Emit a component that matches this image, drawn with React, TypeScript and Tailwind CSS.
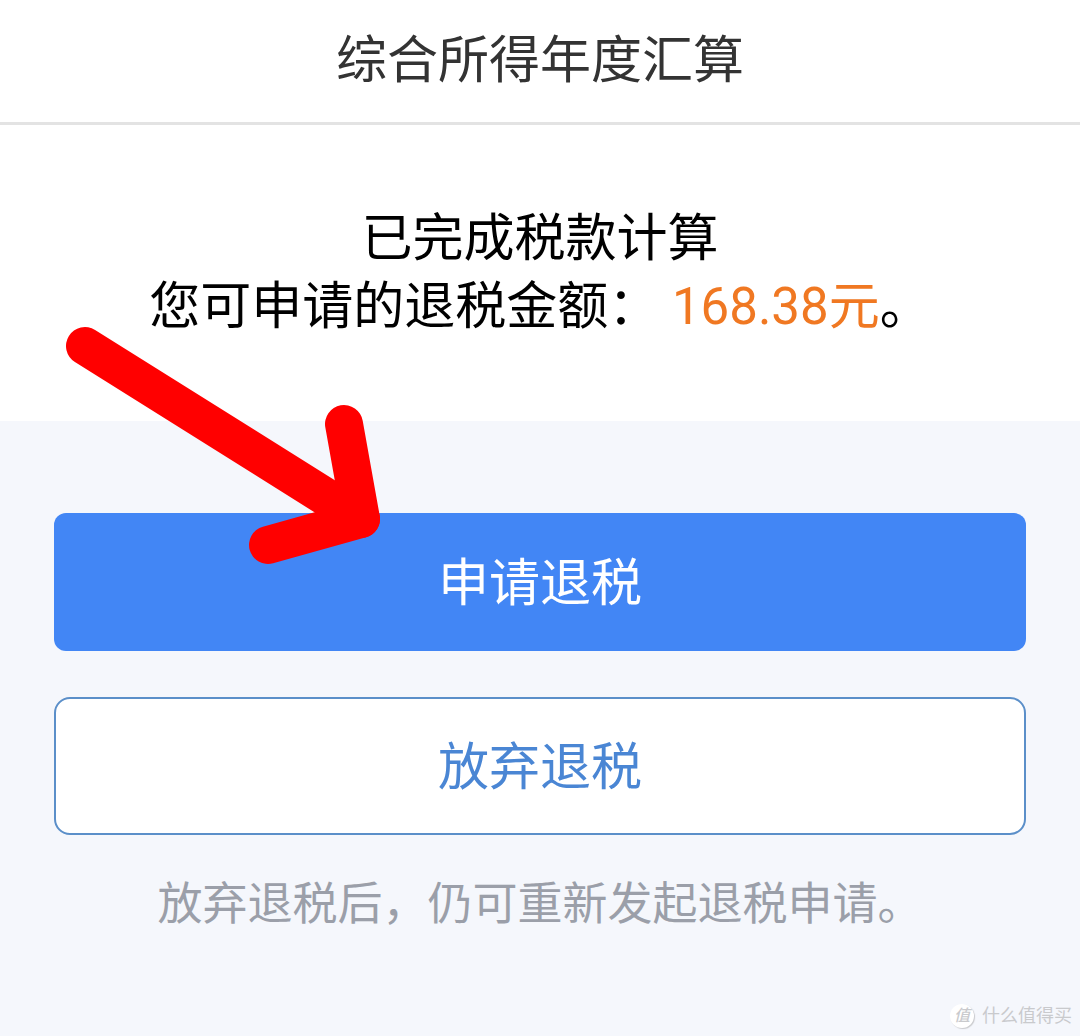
const REFUND_AMOUNT = '168.38';

function Header() {
  return (
    <header className="border-b-3 border-[#e3e3e3] bg-white pt-6 pb-6">
      <h1 className="text-center text-[51px] leading-[74px] text-[#333333]">综合所得年度汇算</h1>
    </header>
  );
}

function PointerArrow() {
  return (
    <svg
      className="pointer-events-none absolute top-[200px] left-[60px]"
      width="330"
      height="250"
      viewBox="60 325 330 250"
      fill="none"
      stroke="#ff0000"
      strokeWidth="38"
      strokeLinecap="round"
      strokeLinejoin="round"
      aria-hidden="true"
    >
      <path d="M85 346 L361 519" />
      <path d="M344 424 L361 519 L268 545" />
    </svg>
  );
}

function Watermark() {
  return (
    <div className="absolute right-2 bottom-2 flex items-center gap-2 text-[#c9cacd]">
      <span className="flex size-6 items-center justify-center rounded-full bg-white text-base leading-6 font-medium italic shadow-[1px_1px_1px_#c9cacd]">
        值
      </span>
      <span className="text-lg leading-6">什么值得买</span>
    </div>
  );
}

export default function App() {
  return (
    <div className="relative flex min-h-screen flex-col bg-[#f5f7fc] font-[Roboto,'Noto_Sans_CJK_SC',sans-serif]">
      <Header />

      <main className="relative flex-1">
        <section className="bg-white pt-20 pb-20 text-center text-[51px] leading-[68px] text-black">
          <p>已完成税款计算</p>
          <p>
            您可申请的退税金额： <span className="text-[#f07822]">{REFUND_AMOUNT}元</span>。
          </p>
        </section>

        <section className="px-[54px] pt-[92px]">
          <div className="flex flex-col gap-[46px]">
            <button type="button" className="h-[138px] rounded-xl bg-[#4286f5] pt-1 text-[51px] leading-[68px] text-white">
              申请退税
            </button>
            <button
              type="button"
              className="h-[138px] rounded-2xl border-2 border-[#5b8fc9] bg-white pt-1 text-[51px] leading-[68px] text-[#4a86d4]"
            >
              放弃退税
            </button>
          </div>
          <p className="mt-9 text-center text-[45px] leading-[68px] text-[#9b9fa9]">放弃退税后，仍可重新发起退税申请。</p>
        </section>

        <PointerArrow />
      </main>

      <Watermark />
    </div>
  );
}
